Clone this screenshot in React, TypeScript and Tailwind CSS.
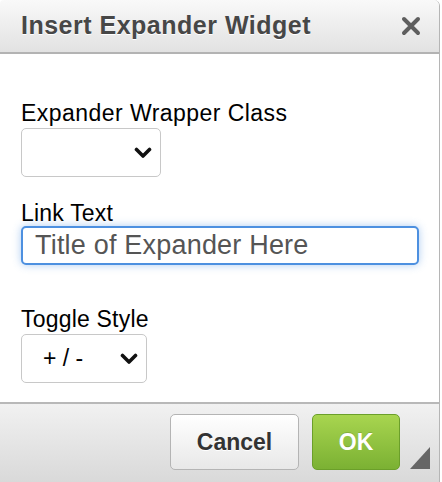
import React from "react";

const Chevron = () => (
  <svg width="18" height="12" viewBox="0 0 18 12" className="shrink-0">
    <path d="M2.5 2.5 L9 9 L15.5 2.5" fill="none" stroke="#111" strokeWidth="3.6" strokeLinecap="round" strokeLinejoin="round" />
  </svg>
);

const App = () => {
  return (
    <div className="w-[442px] h-[482px] bg-white font-['Liberation_Sans',Arial,sans-serif] overflow-hidden">
      <div className="w-[440px] h-full flex flex-col border-r border-[#b5b5b5] rounded-tr-[6px] rounded-tl-[4px] overflow-hidden">
        {/* header */}
        <div className="h-[54px] shrink-0 flex items-center justify-between pl-[21px] pr-[18px] bg-gradient-to-b from-[#f9f9f9] to-[#e2e2e2] border-b-2 border-[#b3b3b3]">
          <h1 className="text-[25px] font-bold text-[#474747] tracking-[0.5px] [text-shadow:0_1px_0_#fff]">
            Insert Expander Widget
          </h1>
          <svg width="20" height="20" viewBox="0 0 20 20">
            <path d="M3 3 L17 17 M17 3 L3 17" stroke="#5e5e5e" strokeWidth="4" strokeLinecap="round" />
          </svg>
        </div>

        {/* body */}
        <div className="flex-1 flex flex-col pl-[21px] pt-[46px] text-black">
          <label className="text-[23px] leading-[26px] tracking-[0.45px]">Expander Wrapper Class</label>
          <div className="mt-[2px] w-[140px] h-[49px] flex items-center justify-end pr-[8px] border border-[#c8c8c8] rounded-[5px] bg-white">
            <Chevron />
          </div>

          <label className="mt-[23px] text-[23px] leading-[26px] tracking-[0.2px]">Link Text</label>
          <div className="w-[398px] h-[39px] flex items-center pl-[12px] border-2 border-[#4d90e0] rounded-[5px] bg-white shadow-[0_0_9px_rgba(77,144,224,0.45)]">
            <span className="text-[27px] text-[#555] leading-none tracking-[0.2px]">Title of Expander Here</span>
          </div>

          <label className="mt-[41px] text-[23px] leading-[26px] tracking-[0.2px]">Toggle Style</label>
          <div className="mt-[2px] w-[126px] h-[49px] flex items-center justify-between pl-[21px] pr-[8px] border border-[#c8c8c8] rounded-[5px] bg-white">
            <span className="text-[23px] leading-none">+ / -</span>
            <Chevron />
          </div>
        </div>

        {/* footer */}
        <div className="h-[80px] shrink-0 flex justify-end items-start pt-[10px] pr-[9px] bg-gradient-to-b from-[#f1f1f1] to-[#d9d9d9] border-t-2 border-[#b8b8b8]">
          <button className="w-[129px] h-[56px] rounded-[5px] border border-[#b4b4b4] bg-gradient-to-b from-[#ffffff] to-[#e8e8e8] text-[23px] font-bold text-[#333] [text-shadow:0_1px_0_#fff]">
            Cancel
          </button>
          <button className="ml-[13px] w-[88px] h-[56px] rounded-[5px] border border-[#6b9f2a] bg-gradient-to-b from-[#a8d54f] to-[#7bb133] text-[23px] font-bold text-white [text-shadow:0_-1px_0_rgba(0,0,0,0.15)]">
            OK
          </button>
          <svg width="20" height="22" viewBox="0 0 20 22" className="ml-[10px] mt-[33px]">
            <path d="M20 0 L20 22 L0 22 Z" fill="#666" />
          </svg>
        </div>
      </div>
    </div>
  );
};

export default App;
